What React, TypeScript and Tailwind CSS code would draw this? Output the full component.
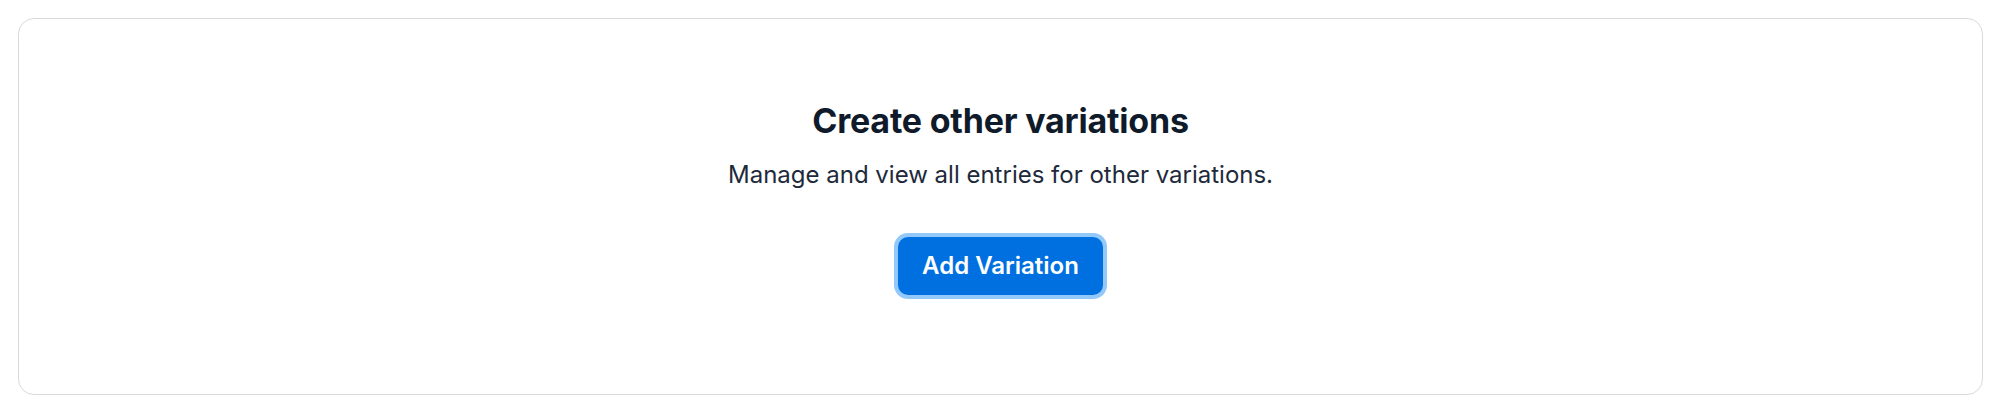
export default function App() {
  return (
    <div className="w-full min-h-screen bg-white pt-[18px] pl-[18px] pr-[16px] font-['Inter',_'Liberation_Sans',_sans-serif]">
      <section className="h-[377px] rounded-2xl border border-[#dadada] bg-white flex flex-col items-center pt-[81px]">
        <h2 className="text-[34px] leading-[41px] font-bold text-[#0f1a2a] tracking-[-0.2px]">
          Create other variations
        </h2>
        <p className="mt-[18px] text-[24px] leading-[32px] text-[#1e2a3b]">
          Manage and view all entries for other variations.
        </p>
        <button
          type="button"
          className="mt-[46px] h-[58px] px-6 rounded-[10px] bg-[#0070e0] text-white text-[24px] font-semibold ring-4 ring-[#93c8fb]"
        >
          Add Variation
        </button>
      </section>
    </div>
  );
}
